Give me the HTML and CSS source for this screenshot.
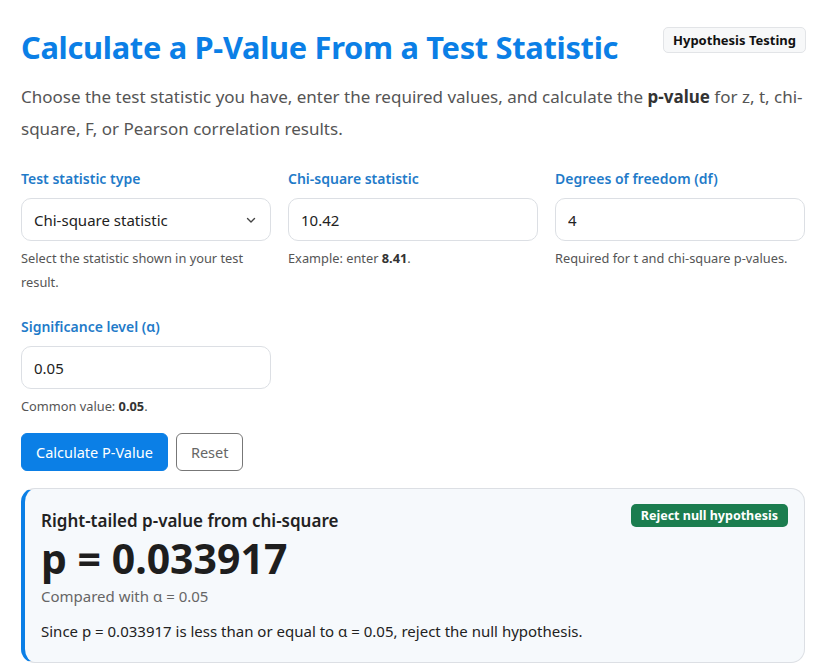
FILE: index.html
```html
<!DOCTYPE html>
<html lang="en">
<head>
  <meta charset="UTF-8">
  <meta name="viewport" content="width=device-width, initial-scale=1.0">
  <title>P-Value From a Test Statistic</title>
  <link rel="stylesheet" href="styles.css">
</head>
<body>
  <main class="calc">
    <!-- Header -->
    <header class="calc-head">
      <h1>Calculate a P-Value From a Test Statistic</h1>
      <span class="tag">Hypothesis Testing</span>
    </header>
    <p class="intro">Choose the test statistic you have, enter the required values, and calculate the <strong>p-value</strong> for z, t, chi-square, F, or Pearson correlation results.</p>

    <!-- Inputs -->
    <form class="fields" onsubmit="return false">
      <div class="field">
        <label for="stat-type">Test statistic type</label>
        <div class="select-wrap">
          <select id="stat-type">
            <option>z statistic</option>
            <option>t statistic</option>
            <option selected>Chi-square statistic</option>
            <option>F statistic</option>
            <option>Pearson correlation (r)</option>
          </select>
          <svg class="chev" width="12" height="12" viewBox="0 0 12 12"><path d="M2.5 4.5 6 8l3.5-3.5" fill="none" stroke="#444" stroke-width="1.4" stroke-linecap="round" stroke-linejoin="round"/></svg>
        </div>
        <small>Select the statistic shown in your test result.</small>
      </div>
      <div class="field">
        <label for="stat-value">Chi-square statistic</label>
        <input id="stat-value" type="text" value="10.42">
        <small>Example: enter <b>8.41</b>.</small>
      </div>
      <div class="field">
        <label for="df">Degrees of freedom (df)</label>
        <input id="df" type="text" value="4">
        <small>Required for t and chi-square p-values.</small>
      </div>
      <div class="field">
        <label for="alpha">Significance level (&alpha;)</label>
        <input id="alpha" type="text" value="0.05">
        <small>Common value: <b>0.05</b>.</small>
      </div>
    </form>

    <div class="actions">
      <button class="btn btn-primary" type="button">Calculate P-Value</button>
      <button class="btn btn-ghost" type="button">Reset</button>
    </div>

    <!-- Result -->
    <section class="result">
      <div class="result-top">
        <h2>Right-tailed p-value from chi-square</h2>
        <span class="verdict">Reject null hypothesis</span>
      </div>
      <div class="p-big">p = 0.033917</div>
      <div class="compare">Compared with &alpha; = 0.05</div>
      <p class="explain">Since p = 0.033917 is less than or equal to &alpha; = 0.05, reject the null hypothesis.</p>
    </section>
  </main>
</body>
</html>
```

FILE: styles.css
```css
:root {
  --blue: #0b7fe6;
  --label: #1f7bc9;
  --text: #222;
  --muted: #555;
  --line: #dcdfe4;
  --green: #1b7d4f;
}

* { margin: 0; padding: 0; box-sizing: border-box; }
body {
  font-family: "Noto Sans", "Open Sans", sans-serif;
  color: var(--text);
  background: #fff;
}

.calc { padding: 24px 23px 0 21px; }

/* Header */
.calc-head {
  display: flex;
  justify-content: space-between;
  align-items: flex-start;
}
.calc-head h1 {
  font-size: 30.8px;
  font-weight: 700;
  color: var(--blue);
  line-height: 46px;
  letter-spacing: -0.3px;
}
.tag {
  margin-top: 3px;
  margin-right: -1px;
  padding: 3px 9px;
  font-size: 13px;
  font-weight: 700;
  color: #111;
  background: #f7f8f9;
  border: 1px solid #e2e4e7;
  border-radius: 5px;
}
.intro {
  margin-top: 11px;
  font-size: 17px;
  line-height: 32px;
  color: var(--muted);
}
.intro strong { color: #333; }

/* Fields */
.fields {
  margin-top: 24px;
  display: grid;
  grid-template-columns: repeat(3, 1fr);
  column-gap: 17px;
  row-gap: 23px;
}
.field label {
  display: block;
  font-size: 14px;
  font-weight: 600;
  color: var(--label);
  line-height: 20px;
  margin-bottom: 9px;
}
.field input,
.field select {
  width: 100%;
  height: 43px;
  padding: 0 12px;
  font: inherit;
  font-size: 15px;
  color: #222;
  background: #fff;
  border: 1px solid var(--line);
  border-radius: 10px;
  appearance: none;
  outline: none;
}
.select-wrap { position: relative; }
.chev { position: absolute; right: 14px; top: 16px; pointer-events: none; }
.field small {
  display: block;
  margin-top: 5px;
  font-size: 12.8px;
  line-height: 24px;
  color: var(--muted);
}
.field small b { color: #333; }

/* Buttons */
.actions { margin-top: 15px; display: flex; gap: 8px; }
.btn {
  font: inherit;
  font-size: 14.5px;
  height: 38px;
  padding: 0 14px;
  border-radius: 6px;
  cursor: pointer;
}
.btn-primary { background: var(--blue); color: #fff; border: 1px solid var(--blue); }
.btn-ghost { background: #fff; color: #666; border: 1px solid #777; }

/* Result card */
.result {
  margin-top: 17px;
  padding: 15px 16px 20px 16px;
  background: #f6f9fc;
  border: 1px solid var(--line);
  border-left: 4px solid var(--blue);
  border-radius: 14px;
}
.result-top {
  display: flex;
  justify-content: space-between;
  align-items: flex-start;
}
.result h2 {
  margin-top: 3px;
  font-size: 17px;
  font-weight: 600;
  line-height: 28px;
  color: #222;
}
.verdict {
  padding: 3px 10px;
  font-size: 12.5px;
  font-weight: 700;
  line-height: 17px;
  color: #fff;
  background: var(--green);
  border-radius: 5px;
}
.p-big {
  font-size: 41px;
  font-weight: 700;
  line-height: 46px;
  color: #1e1e1e;
}
.compare { margin-top: 5px; font-size: 15px; color: #666; line-height: 20px; }
.explain { margin-top: 14px; font-size: 15px; line-height: 22px; color: #222; }
```
